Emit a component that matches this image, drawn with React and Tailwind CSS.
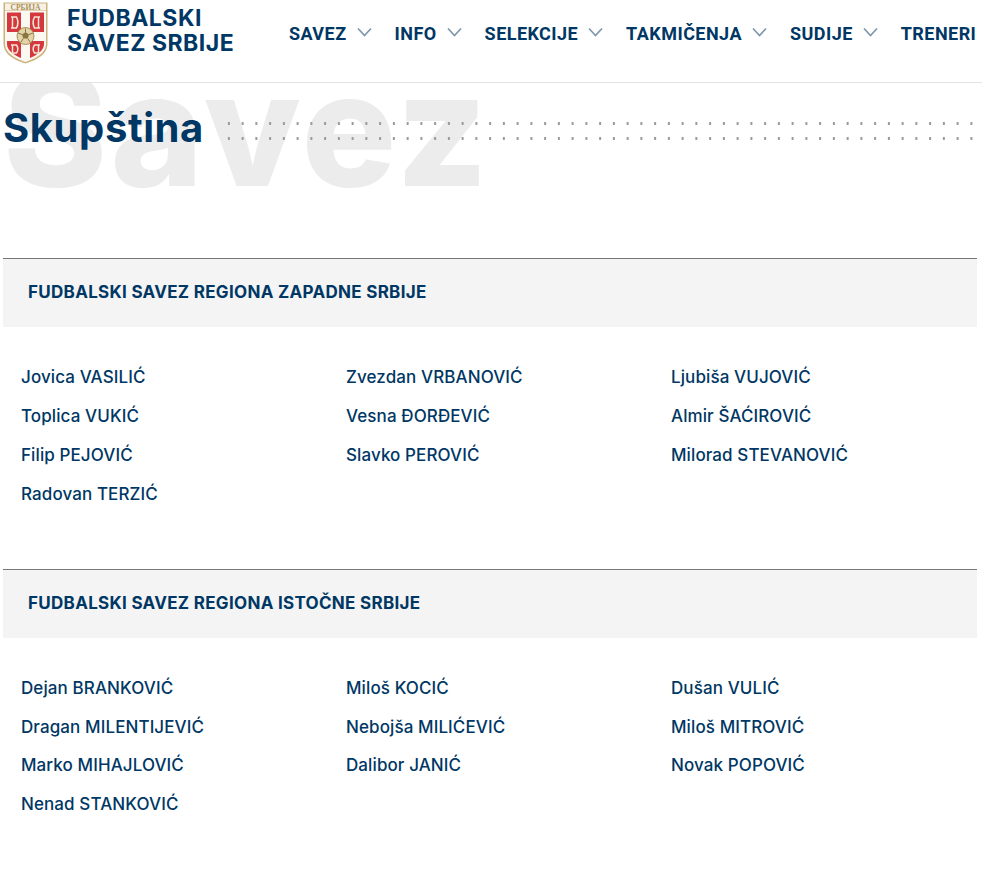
import React from "react";

const navy = "text-[#003764]";

function Crest() {
  return (
    <svg width="45" height="62" viewBox="0 0 45 62" className="shrink-0">
      <path d="M0.5 0.5H44.5V42C44.5 52 34 58 22.5 61.500000C11 58 0.5 52 0.5 42Z" fill="#cdb27a" />
      <rect x="2" y="1.500000" width="41" height="7" fill="#f6f1e4" />
      <path d="M2 9H43V42C43 51 33 56.500000 22.500000 60C12 56.500000 2 51 2 42Z" fill="#fbf8f2" />
      <path d="M4 10.500000H18V30H4ZM27 10.500000H41V30H27ZM4 39H18V56C10 52.500000 4 48 4 42ZM27 39H41V42C41 48 35 52.500000 27 56Z" fill="#d4373d" />
      <g fill="none" stroke="#f3e6d4" strokeWidth="1.500000">
        <path d="M8 15H13.500000C15.500000 19 15.500000 22 13.500000 26H8M9.500000 15V26M37 15H31.500000C29.500000 19 29.500000 22 31.500000 26H37M35.500000 15V26" />
        <path d="M8 43H13.500000C15.500000 46 15.500000 48 13.500000 51H9M9.500000 43V51M37 43H31.500000C29.500000 46 29.500000 48 31.500000 51H36M35.500000 43V51" />
      </g>
      <circle cx="22.500000" cy="34" r="8.500000" fill="#e2d3a8" stroke="#a98f58" strokeWidth="1" />
      <path d="M22.500000 30L26 32.500000L24.700000 36.500000H20.300000L19 32.500000Z" fill="#8b7444" />
      <path d="M22.500000 30V26.500000M26 32.500000L30 31M24.700000 36.500000L27 40M20.300000 36.500000L18 40M19 32.500000L15 31" stroke="#8b7444" strokeWidth="1" />
      <text x="22.500000" y="7.600000" textAnchor="middle" fontSize="7.500000" fontWeight="700" fill="#a98f58" fontFamily="'Liberation Serif', serif">СРБИЈА</text>
    </svg>
  );
}

function Chevron() {
  return (
    <svg width="15" height="10" viewBox="0 0 15 10" fill="none" stroke="#7d97ae" strokeWidth="1.700000" className="ml-[10px] mt-[-2px] shrink-0">
      <path d="M1 1.500000L7.500000 8.500000L14 1.500000" />
    </svg>
  );
}

const nav = [
  ["SAVEZ", true],
  ["INFO", true],
  ["SELEKCIJE", true],
  ["TAKMIČENJA", true],
  ["SUDIJE", true],
  ["TRENERI", false],
];

function Section({ title, columns }) {
  return (
    <section>
      <h2 className={`h-[69px] flex items-center pl-[25px] bg-[#f4f4f4] border-t border-[#777] text-[17px] font-bold tracking-[0.3px] ${navy}`}>
        {title}
      </h2>
      <div className="grid grid-cols-[325px_325px_325px] pt-[31.500000px] pl-[18px]">
        {columns.map((col, i) => (
          <ul key={i} className="flex flex-col">
            {col.map((name) => (
              <li key={name} className={`h-[38.800000px] flex items-center text-[17px] font-medium tracking-[0.1px] ${navy}`}>
                {name}
              </li>
            ))}
          </ul>
        ))}
      </div>
    </section>
  );
}

export default function App() {
  return (
    <div className="w-[982px] min-h-[872px] bg-white overflow-hidden font-['Inter','Liberation_Sans',sans-serif]">
      <header className="h-[83px] border-b border-[#e2e2e2] pl-[3px] pr-[5px] flex items-start">
        <div className="flex items-start pt-[2px] w-[286px] shrink-0">
          <Crest />
          <div className={`ml-[19px] mt-[4px] text-[23px] leading-[25px] font-bold tracking-[0.5px] ${navy}`}>
            FUDBALSKI
            <br />
            SAVEZ SRBIJE
          </div>
        </div>
        <nav className="flex items-center h-[66px] overflow-hidden whitespace-nowrap flex-1">
          {nav.map(([label, chev], i) => (
            <div key={label} className={`flex items-center ${i < 5 ? "mr-[23px]" : ""}`}>
              <span className={`text-[18px] font-bold font-['Roboto',sans-serif] tracking-[0.45px] ${navy}`}>{label}</span>
              {chev && <Chevron />}
            </div>
          ))}
        </nav>
      </header>

      <main className="px-[3px] w-[980px]">
        <div className="relative h-[175px] overflow-hidden">
          <div className="absolute left-[0px] top-[-49px] text-[158px] leading-[190px] font-extrabold text-[#ececec] tracking-[3.2px] select-none">
            Savez
          </div>
          <div className="relative flex items-center h-[90px]">
            <h1 className={`text-[40px] leading-none font-bold tracking-[0.6px] ${navy}`}>Skupština</h1>
            <div className="absolute left-[219px] top-[33px] w-[756px] h-[30px] bg-[radial-gradient(circle,#999_1.1px,transparent_1.5px)] bg-[length:13.750000px_15px]" />
          </div>
        </div>

        <Section
          title="FUDBALSKI SAVEZ REGIONA ZAPADNE SRBIJE"
          columns={[
            ["Jovica VASILIĆ", "Toplica VUKIĆ", "Filip PEJOVIĆ", "Radovan TERZIĆ"],
            ["Zvezdan VRBANOVIĆ", "Vesna ĐORĐEVIĆ", "Slavko PEROVIĆ"],
            ["Ljubiša VUJOVIĆ", "Almir ŠAĆIROVIĆ", "Milorad STEVANOVIĆ"],
          ]}
        />
        <div className="h-[55px]" />
        <Section
          title="FUDBALSKI SAVEZ REGIONA ISTOČNE SRBIJE"
          columns={[
            ["Dejan BRANKOVIĆ", "Dragan MILENTIJEVIĆ", "Marko MIHAJLOVIĆ", "Nenad STANKOVIĆ"],
            ["Miloš KOCIĆ", "Nebojša MILIĆEVIĆ", "Dalibor JANIĆ"],
            ["Dušan VULIĆ", "Miloš MITROVIĆ", "Novak POPOVIĆ"],
          ]}
        />
      </main>
    </div>
  );
}
